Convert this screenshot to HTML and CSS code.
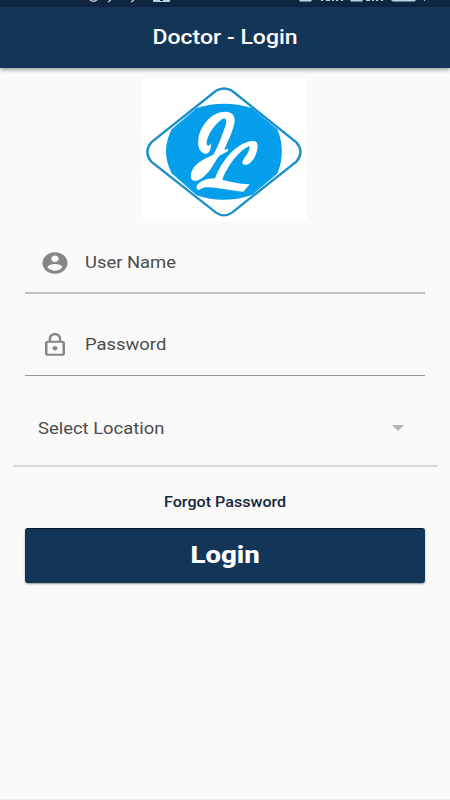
FILE: index.html
```html
<!DOCTYPE html>
<html lang="en">
<head>
    <meta charset="UTF-8">
    <meta name="viewport" content="width=device-width, initial-scale=1.0">
    <title>Doctor - Login</title>
    <link rel="stylesheet" href="styles.css">
</head>
<body>
    <div class="status">
        <svg width="450" height="7" viewBox="0 0 450 7">
            <g fill="none" stroke="#c3d3df" stroke-width="1.3">
                <path d="M90 0q4 3 8-1M111 0l-3 2M134 0l-3 2"/>
            </g>
            <g fill="#b9d3e6">
                <path d="M153 0h17v1q0 1-1 1h-15q-1 0-1-1z"/>
                <path d="M299 0h13l-1 1.5h-11zM350 0h13l-1 1.5h-11zM391 0h25q-1 1.500-3 1.500h-19q-2 0-3-1.500z"/>
                <path d="M321 0h2v1h-2zM326 0h4v1h-4zM332 0h2v1h-2zM336 0h2v1h-2zM341 0h2v1h-2zM366 0h4v1h-4zM372 0h2v1h-2zM376 0h2v1h-2zM381 0h2v1h-2zM424 0h1v1h-1z"/>
            </g>
            <path d="M160 0h3v1h-3z" fill="#10263f"/>
        </svg>
    </div>
    <header>
        <h1 class="wide">Doctor - Login</h1>
    </header>
    <main>
        <div class="logo">
            <svg width="164" height="142" viewBox="24 21 492 426">
                <path d="M242 57Q267 42 292 57L485 212Q508 240 485 268L292 421Q267 439 242 421L48 268Q26 240 48 212z" fill="#fff" stroke="#188fcb" stroke-width="7"/>
                <path d="M185 108Q267 82 350 108L427 172Q454 238 427 305L352 368Q267 398 185 370L110 304Q76 238 110 172z" fill="#049eea"/>
                <path fill="#fff" d="M212 246C194 242 187 225 190 202C194 167 222 130 256 121C286 115 301 126 299 148C296 174 279 207 268 234L280 230L278 238L258 248C243 257 238 279 220 300C203 320 188 329 175 326C163 321 166 301 177 286C191 267 213 258 235 248C250 224 263 184 272 160C277 143 270 134 258 144C236 160 215 194 215 213C214 224 224 223 228 214C229 231 223 245 212 246z"/>
                <path fill="#fff" d="M240 319C250 292 264 269 281 250C300 227 330 207 354 207C373 207 369 230 362 248C354 269 338 283 325 277C316 270 329 258 336 247C344 233 348 219 339 224C321 232 302 253 288 273C276 291 266 308 262 323C283 329 311 335 344 337L325 359C285 356 242 345 214 346C202 346 198 354 188 354C180 347 187 334 200 328C210 322 225 319 240 319z"/>
            </svg>
        </div>
        <form id="login">
            <div class="field user">
                <svg width="30" height="26" viewBox="0 0 24 24" preserveAspectRatio="none">
                    <path d="M12 2C6.48 2 2 6.48 2 12s4.48 10 10 10 10-4.480 10-10S17.520 2 12 2zm0 3c1.660 0 3 1.340 3 3s-1.340 3-3 3-3-1.340-3-3 1.340-3 3-3zm0 14.200c-2.500 0-4.710-1.280-6-3.220.030-1.990 4-3.080 6-3.080 1.990 0 5.970 1.090 6 3.080-1.290 1.940-3.500 3.220-6 3.220z"/>
                </svg>
                <label class="wide left">User Name</label>
            </div>
            <div class="field password">
                <svg width="30" height="26" viewBox="0 0 24 24" preserveAspectRatio="none">
                    <path d="M18 8h-1V6c0-2.760-2.240-5-5-5S7 3.240 7 6v2H6c-1.100 0-2 .9-2 2v10c0 1.100.9 2 2 2h12c1.100 0 2-.9 2-2V10c0-1.100-.9-2-2-2zM8.900 6c0-1.710 1.390-3.100 3.100-3.100s3.100 1.390 3.100 3.100v2H8.900V6zM18 20H6V10h12v10zm-6-3c1.100 0 2-.9 2-2s-.9-2-2-2-2 .9-2 2 .9 2 2 2z"/>
                </svg>
                <label class="wide left">Password</label>
            </div>
            <div class="location">
                <span class="wide left">Select Location</span>
                <svg width="12" height="6" viewBox="0 0 12 6">
                    <path d="M0 0h12L6 6z"/>
                </svg>
            </div>
            <a class="forgot wide">Forgot Password</a>
            <button type="button"><span class="wide">Login</span></button>
        </form>
    </main>
</body>
</html>
```
FILE: styles.css
```css
html, body {
    margin: 0;
    padding: 0;
    height: 100%;
}
body {
    display: flex;
    flex-direction: column;
    background-color: #fafafa;
    font-family: Roboto, sans-serif;
}
svg {
    display: block;
}
.wide {
    display: inline-block;
    transform: scaleX(1.15);
}
.left {
    transform-origin: left;
}
.status {
    height: 7px;
    background-color: #10263f;
}
header {
    display: flex;
    justify-content: center;
    height: 61px;
    background-color: #133557;
    box-shadow: 0 2px 4px rgba(0, 0, 0, 0.35);
}
h1 {
    margin: 0;
    color: #fff;
    font-size: 20px;
    font-weight: 500;
    line-height: 60px;
}
main {
    flex: 1;
    border-bottom: 1px solid #eee;
}
.logo {
    width: 164px;
    height: 142px;
    margin: 11px auto 0 143px;
    background-color: #fff;
}
#login {
    display: flex;
    flex-direction: column;
}
.field {
    display: flex;
    align-items: center;
    gap: 15px;
    height: 61px;
    margin: 10px 25px 0;
    padding-left: 15px;
    border-bottom: 2px solid #c0c0c0;
    color: #4c4c4c;
    font-size: 16px;
}
.field svg {
    fill: #868686;
}
.user {
    height: 59px;
    padding-top: 2px;
}
.password {
    margin-top: 20px;
    border-bottom: 1px solid #999;
}
.location {
    display: flex;
    align-items: center;
    justify-content: space-between;
    height: 77px;
    margin: 14px 12px 0 13px;
    padding: 1px 34px 0 25px;
    box-sizing: border-box;
    border-bottom: 2px solid #d8d8d8;
    color: #4c4c4c;
    font-size: 16px;
}
.location svg {
    fill: #b4b4b4;
}
.forgot {
    align-self: center;
    margin-top: 25px;
    color: #14263c;
    font-size: 14px;
    font-weight: 500;
    line-height: 20px;
}
button {
    height: 55px;
    margin: 16px 25px 0;
    padding: 0 0 2px;
    border: 0;
    border-top: 1px solid #06172b;
    border-radius: 3px;
    background-color: #133557;
    box-shadow: 0 1px 2px rgba(0, 0, 0, 0.4);
    color: #fff;
    font-family: Roboto, sans-serif;
    font-size: 24px;
    font-weight: 800;
}
```
